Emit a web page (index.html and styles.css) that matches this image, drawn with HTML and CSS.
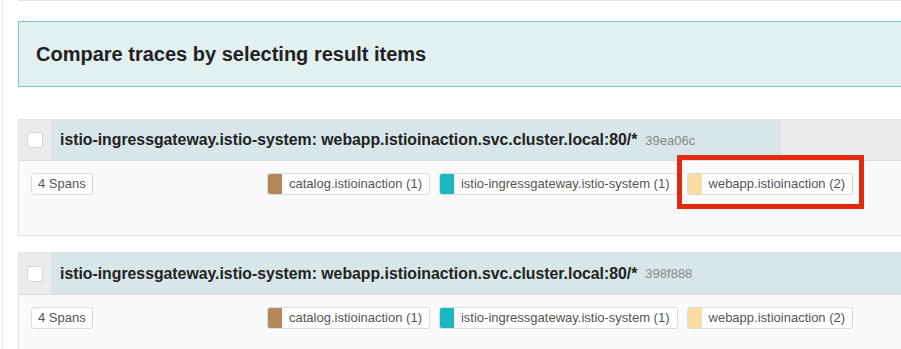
FILE: index.html
```html
<!DOCTYPE html>
<html lang="en">
<head>
	<meta charset="UTF-8">
	<title>Search results</title>
	<link rel="stylesheet" href="styles.css">
</head>
<body>
	<div class="page">
		<div class="results">
			<div class="top-rule"></div>

			<div class="compare-hint">
				<h2>Compare traces by selecting result items</h2>
			</div>

			<!-- 第一条 trace -->
			<div class="trace-item">
				<div class="trace-head">
					<div class="select-cell"><span class="checkbox"></span></div>
					<div class="trace-title">
						<span class="trace-name">istio-ingressgateway.istio-system: webapp.istioinaction.svc.cluster.local:80/*</span>
						<span class="trace-id">39ea06c</span>
					</div>
					<div class="trace-duration"></div>
				</div>
				<div class="trace-body">
					<div class="span-count"><span class="tag">4 Spans</span></div>
					<div class="services">
						<span class="svc"><i class="swatch catalog"></i><span class="svc-name">catalog.istioinaction (1)</span></span>
						<span class="svc"><i class="swatch gateway"></i><span class="svc-name">istio-ingressgateway.istio-system (1)</span></span>
						<span class="svc"><i class="swatch webapp"></i><span class="svc-name">webapp.istioinaction (2)</span></span>
					</div>
				</div>
				<div class="highlight"></div>
			</div>

			<!-- 第二条 trace -->
			<div class="trace-item second">
				<div class="trace-head">
					<div class="select-cell"><span class="checkbox"></span></div>
					<div class="trace-title">
						<span class="trace-name">istio-ingressgateway.istio-system: webapp.istioinaction.svc.cluster.local:80/*</span>
						<span class="trace-id">398f888</span>
					</div>
				</div>
				<div class="trace-body">
					<div class="span-count"><span class="tag">4 Spans</span></div>
					<div class="services">
						<span class="svc"><i class="swatch catalog"></i><span class="svc-name">catalog.istioinaction (1)</span></span>
						<span class="svc"><i class="swatch gateway"></i><span class="svc-name">istio-ingressgateway.istio-system (1)</span></span>
						<span class="svc"><i class="swatch webapp"></i><span class="svc-name">webapp.istioinaction (2)</span></span>
					</div>
				</div>
			</div>
		</div>
	</div>
</body>
</html>
```

FILE: styles.css
```css
/* 基础样式 */
html, body {
	margin: 0;
	overflow: hidden;
	background: #fff;
}

body {
	font-family: 'Liberation Sans', Arial, sans-serif;
	color: #222;
	height: 349px;
}

.page {
	margin-left: 2px;
	border-left: 1px solid #e8e8e8;
	padding-left: 15px;
	height: 349px;
	overflow: hidden;
}

.results {
	width: 1000px;
}

.top-rule {
	height: 0;
	border-bottom: 1px solid #e6e6e6;
}

/* 提示框 */
.compare-hint {
	margin-top: 20px;
	height: 64px;
	background: #e2f0f0;
	border: 1px solid #7fc6be;
	display: flex;
	align-items: center;
	padding-left: 17px;
}

.compare-hint h2 {
	margin: 0;
	font-size: 20px;
	font-weight: 700;
	color: #222;
}

/* trace 条目 */
.trace-item {
	position: relative;
	margin-top: 32px;
	border: 1px solid #e4e4e4;
	border-right: none;
}

.trace-item.second {
	margin-top: 16px;
}

.trace-head {
	display: flex;
	height: 40px;
	background: #ebebeb;
	border-bottom: 1px solid #dcdcdc;
}

.trace-item.second .trace-head {
	height: 41px;
}

.select-cell {
	width: 32px;
	display: flex;
	align-items: center;
	justify-content: center;
}

.checkbox {
	width: 14px;
	height: 14px;
	background: #fff;
	border: 1px solid #d4d4d4;
	border-radius: 3px;
}

.trace-title {
	width: 721px;
	background: #d8e6ea;
	display: flex;
	align-items: center;
	padding-left: 9px;
	white-space: nowrap;
}

.trace-item.second .trace-title {
	flex: 1;
}

.trace-name {
	font-size: 15.8px;
	font-weight: 700;
	color: #222;
}

.trace-id {
	margin-left: 8px;
	font-size: 13px;
	color: #888;
}

.trace-body {
	display: flex;
	align-items: flex-start;
	background: #fafafa;
	padding: 12px 12px 0;
	height: 62px;
}

.span-count {
	width: 236px;
}

.tag {
	display: inline-block;
	height: 20px;
	line-height: 20px;
	padding: 0 6px;
	border: 1px solid #d9d9d9;
	border-radius: 3px;
	background: #fff;
	font-size: 13px;
	color: #555;
}

.services {
	display: flex;
	gap: 9px;
}

.svc {
	display: flex;
	height: 20px;
	border: 1px solid #d9d9d9;
	border-radius: 3px;
	background: #fff;
	overflow: hidden;
}

.swatch {
	width: 15px;
	margin: -1px 0 -1px -1px;
	border-radius: 3px 0 0 3px;
}

.swatch.catalog { background: #b5885e; }
.swatch.gateway { background: #17b8be; }
.swatch.webapp { background: #f8dca1; }

.svc-name {
	padding: 0 7px 0 7px;
	line-height: 20px;
	font-size: 13px;
	color: #555;
	white-space: nowrap;
}

/* 红框标注 */
.highlight {
	position: absolute;
	left: 658px;
	top: 35px;
	width: 177px;
	height: 44px;
	border: 5px solid #e32a10;
}
```
